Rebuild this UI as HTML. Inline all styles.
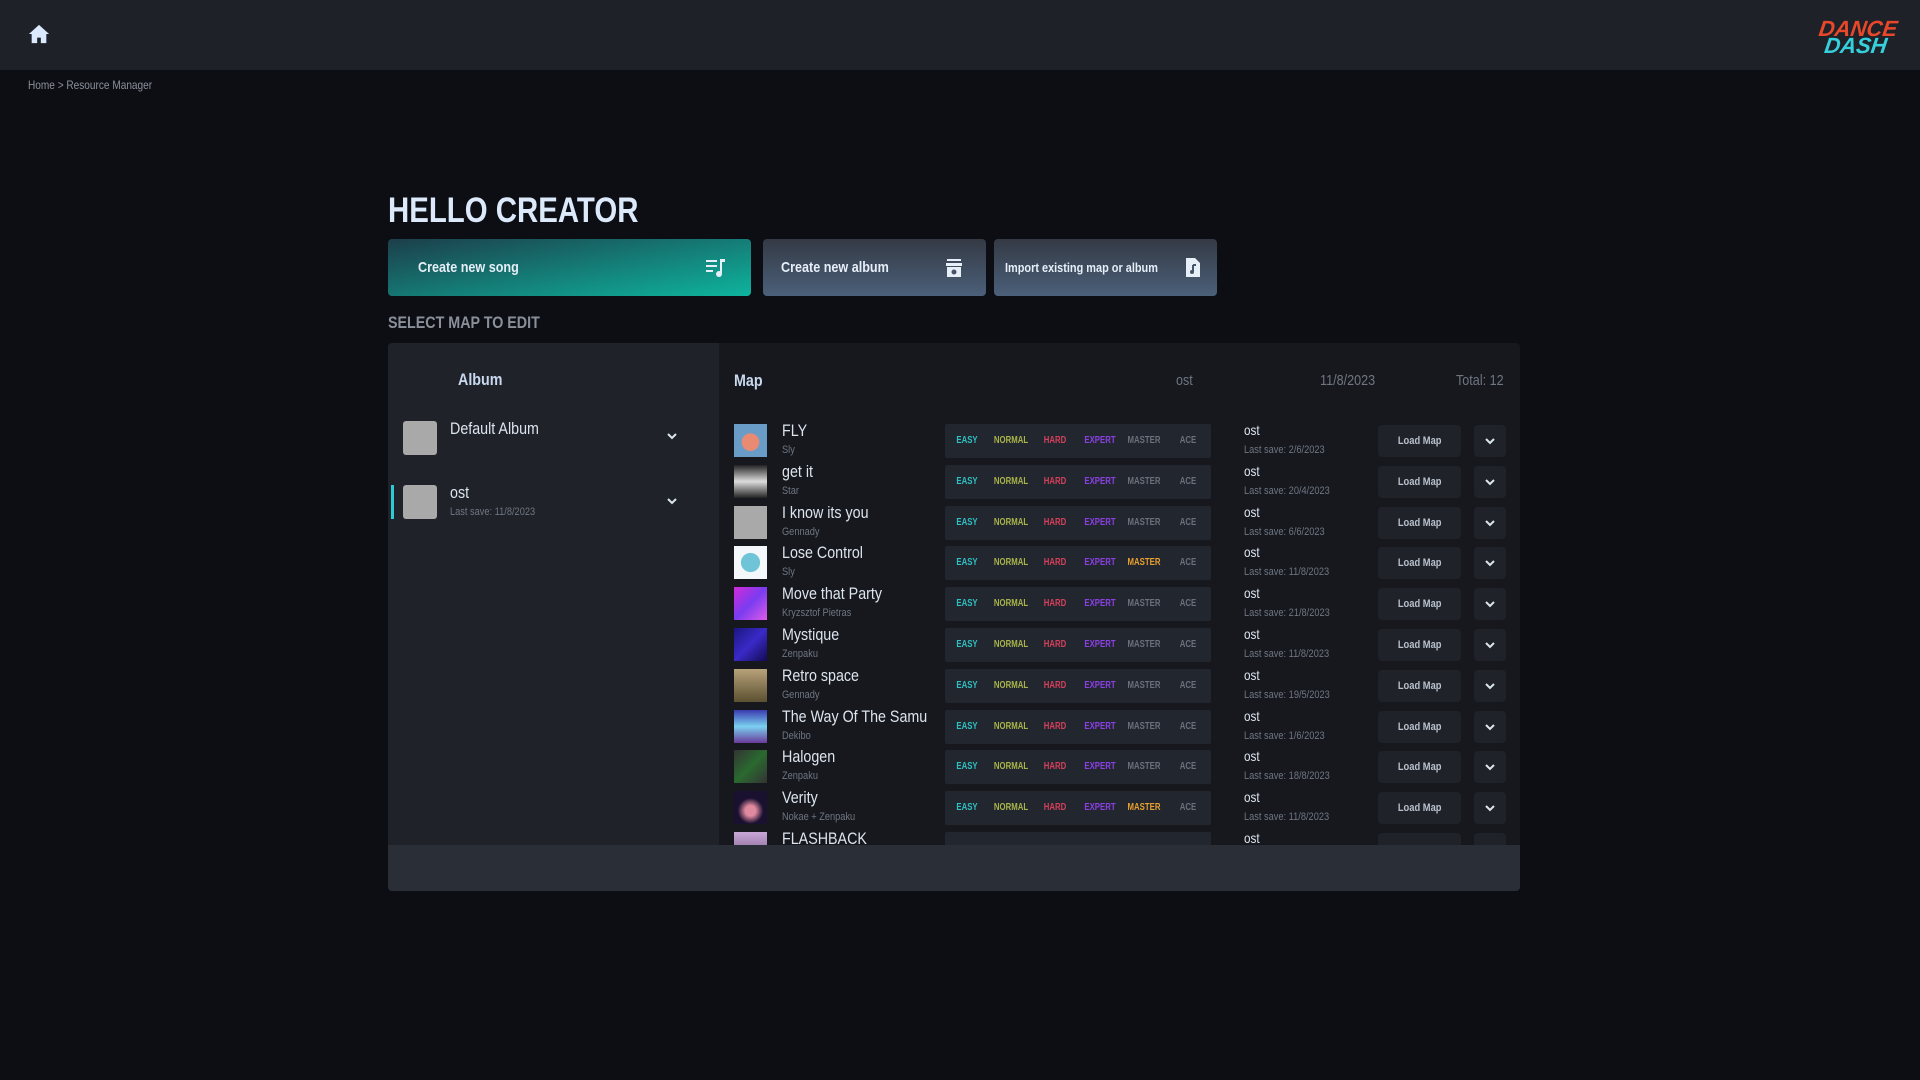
<!DOCTYPE html><html><head><meta charset="utf-8"><style>
*{margin:0;padding:0;box-sizing:border-box}
body{width:1920px;height:1080px;background:#0d0e14;font-family:"Liberation Sans",sans-serif;color:#dfe6f0;position:relative;overflow:hidden}
.a{position:absolute}
.n{transform:scaleX(.84);transform-origin:0 0;white-space:nowrap}
.hdr{left:0;top:0;width:1920px;height:70px;background:#1e2128}
.btn{top:239px;height:57px;border-radius:4px;font-size:15px;font-weight:bold;color:#e6eef8}
.btn span{position:absolute;top:20px}
.lbl{font-size:10px;font-weight:bold;transform:translateX(-50%) scaleX(.78);white-space:nowrap}
.t{font-size:17px;color:#dce4ee}
.s{font-size:11px;color:#6f7682}
</style></head><body>
<div class="a hdr"></div>
<svg class="a" style="left:28px;top:23px" width="22" height="22" viewBox="0 0 24 24"><path d="M12 2L1 12h3v10h6v-6h4v6h6V12h3z" fill="#dbeafe"/></svg>
<div class="a" style="left:1802px;top:20px;font:italic 900 22px/17px 'Liberation Sans',sans-serif;text-align:center;width:110px;transform:skewX(-8deg)"><div style="color:#e8482a">DANCE</div><div style="color:#36d0dc">DASH</div></div>
<div class="a n" style="left:28px;top:78px;font-size:12px;color:#8b919c">Home &gt; Resource Manager</div>
<div class="a n" style="left:388px;top:191px;font-size:35px;font-weight:bold;color:#dbe9fb">HELLO CREATOR</div>
<div class="a btn" style="left:388px;width:363px;background:linear-gradient(170deg,#1c3e4a,#0eb49e)"><span class="n" style="left:30px">Create new song</span>
<svg class="a" style="right:24px;top:18px" width="22" height="22" viewBox="0 0 22 22" fill="#e6eef8"><rect x="1" y="3" width="11" height="2"/><rect x="1" y="8" width="11" height="2"/><rect x="1" y="13" width="7" height="2"/><rect x="15" y="2" width="2" height="14"/><rect x="15" y="2" width="5" height="3"/><circle cx="14" cy="17" r="3"/></svg></div>
<div class="a btn" style="left:763px;width:223px;background:linear-gradient(180deg,#343a45,#4b6079)"><span class="n" style="left:18px">Create new album</span>
<svg class="a" style="right:22px;top:19px" width="20" height="20" viewBox="0 0 20 20" fill="#e6eef8"><rect x="3" y="1" width="14" height="2"/><rect x="2" y="5" width="16" height="3"/><path d="M3 9h14v10H3z"/><circle cx="10" cy="14" r="2.5" fill="#44546a"/></svg></div>
<div class="a btn" style="left:994px;width:223px;background:linear-gradient(180deg,#343a45,#4b6079)"><span class="n" style="left:11px;font-size:13px;top:21px">Import existing map or album</span>
<svg class="a" style="right:16px;top:18px" width="16" height="21" viewBox="0 0 16 21" fill="#e6eef8"><path d="M1 1h9l5 5v14H1z"/><path d="M8 8v7M8 8h3" stroke="#44546a" stroke-width="2"/><circle cx="7" cy="15" r="2" fill="#44546a"/></svg></div>
<div class="a n" style="left:388px;top:313px;font-size:17px;font-weight:bold;color:#8a909a">SELECT MAP TO EDIT</div>
<div class="a" style="left:388px;top:343px;width:1132px;height:502px;background:#16181e;border-radius:4px 4px 0 0;overflow:hidden">
 <div class="a" style="left:0;top:0;width:331px;height:502px;background:#1f2229"></div>
 <div class="a n" style="left:70px;top:27px;font-size:17px;font-weight:bold;color:#c8d8ee">Album</div>
 <div class="a" style="left:15px;top:78px;width:34px;height:34px;background:#a9a9a9;border-radius:3px"></div>
 <div class="a t n" style="left:62px;top:76px">Default Album</div>
 <svg class="a" style="left:278px;top:89px" width="12" height="8" viewBox="0 0 12 8"><path d="M2 2l4 4 4-4" stroke="#dce4ee" stroke-width="2" fill="none"/></svg>
 <div class="a" style="left:3px;top:142px;width:3px;height:34px;background:#2fc9d2"></div>
 <div class="a" style="left:15px;top:142px;width:34px;height:34px;background:#a9a9a9;border-radius:3px"></div>
 <div class="a t n" style="left:62px;top:140px">ost</div>
 <div class="a s n" style="left:62px;top:163px">Last save: 11/8/2023</div>
 <svg class="a" style="left:278px;top:154px" width="12" height="8" viewBox="0 0 12 8"><path d="M2 2l4 4 4-4" stroke="#dce4ee" stroke-width="2" fill="none"/></svg>
 <div class="a n" style="left:346px;top:28px;font-size:17px;font-weight:bold;color:#c8d8ee">Map</div>
 <div class="a n" style="left:788px;top:29px;font-size:15px;color:#6f7682">ost</div>
 <div class="a n" style="left:932px;top:29px;font-size:15px;color:#6f7682">11/8/2023</div>
 <div class="a n" style="left:1068px;top:29px;font-size:15px;color:#6f7682">Total: 12</div>
 <div id="rows"></div>
</div>
<div class="a" style="left:388px;top:845px;width:1132px;height:46px;background:#2a2e36;border-radius:0 0 4px 4px"></div>
<script>
var d=[["FLY","Sly","2/6/2023","radial-gradient(circle at 50% 55%,#e98b72 35%,#6a9cc8 37%)",0],
["get it","Star","20/4/2023","linear-gradient(#222,#ddd 50%,#222)",0],
["I know its you","Gennady","6/6/2023","#a9a9a9",0],
["Lose Control","Sly","11/8/2023","radial-gradient(circle,#6fc4d8 40%,#f4f8fa 42%)",1],
["Move that Party","Kryzsztof Pietras","21/8/2023","linear-gradient(135deg,#d22ad8,#7a3cf0,#e05ae8)",0],
["Mystique","Zenpaku","11/8/2023","linear-gradient(135deg,#1a1680,#3a2ac8,#120a50)",0],
["Retro space","Gennady","19/5/2023","linear-gradient(#b8a27a,#5b5030)",0],
["The Way Of The Samu","Dekibo","1/6/2023","linear-gradient(#3a3ab0,#7ad0f0,#6a3a9a)",0],
["Halogen","Zenpaku","18/8/2023","linear-gradient(135deg,#333,#2a6a30,#333)",0],
["Verity","Nokae + Zenpaku","11/8/2023","radial-gradient(circle at 50% 60%,#e08aa0 20%,#1a1030 50%)",1],
["FLASHBACK","","","linear-gradient(#c9a8d8,#6a4a7a)",0]];
var h="",L=[["EASY","#2fc0c4",22],["NORMAL","#a8b44a",66],["HARD","#d2405c",110],["EXPERT","#8a40e2",155],["MASTER","#6a707c",199],["ACE","#6a707c",243]];
d.forEach(function(r,i){var y=81+i*40.8;
h+='<div class="a" style="left:346px;top:'+y+'px;width:33px;height:33px;background:'+r[3]+'"></div>';
h+='<div class="a t n" style="left:394px;top:'+(y-3)+'px">'+r[0]+'</div>';
h+='<div class="a s n" style="left:394px;top:'+(y+20)+'px">'+r[1]+'</div>';
h+='<div class="a" style="left:557px;top:'+y+'px;width:266px;height:34px;background:#22262e;border-radius:2px">';
if(r[2])L.forEach(function(l){var c=l[1];if(l[0]=="MASTER"&&r[4])c="#e8a030";h+='<span class="a lbl" style="left:'+l[2]+'px;top:11px;color:'+c+'">'+l[0]+'</span>';});
h+='</div>';
h+='<div class="a n" style="left:856px;top:'+(y-2)+'px;font-size:14px;color:#dce4ee">ost</div>';
if(r[2])h+='<div class="a s n" style="left:856px;top:'+(y+20)+'px">Last save: '+r[2]+'</div>';
h+='<div class="a" style="left:990px;top:'+(y+1)+'px;width:83px;height:32px;background:#1f2229;border-radius:4px;font-size:11px;font-weight:bold;color:#b8c0cc;text-align:center;line-height:32px">'+(r[2]?'<span style="display:inline-block;transform:scaleX(.85)">Load Map</span>':'')+'</div>';
h+='<div class="a" style="left:1086px;top:'+(y+1)+'px;width:32px;height:32px;background:#1f2229;border-radius:4px">'+(r[2]?'<svg style="margin:12px 10px" width="12" height="8" viewBox="0 0 12 8"><path d="M2 2l4 4 4-4" stroke="#dce4ee" stroke-width="2" fill="none"/></svg>':'')+'</div>';});
document.getElementById("rows").innerHTML=h;
</script>
</body></html>
